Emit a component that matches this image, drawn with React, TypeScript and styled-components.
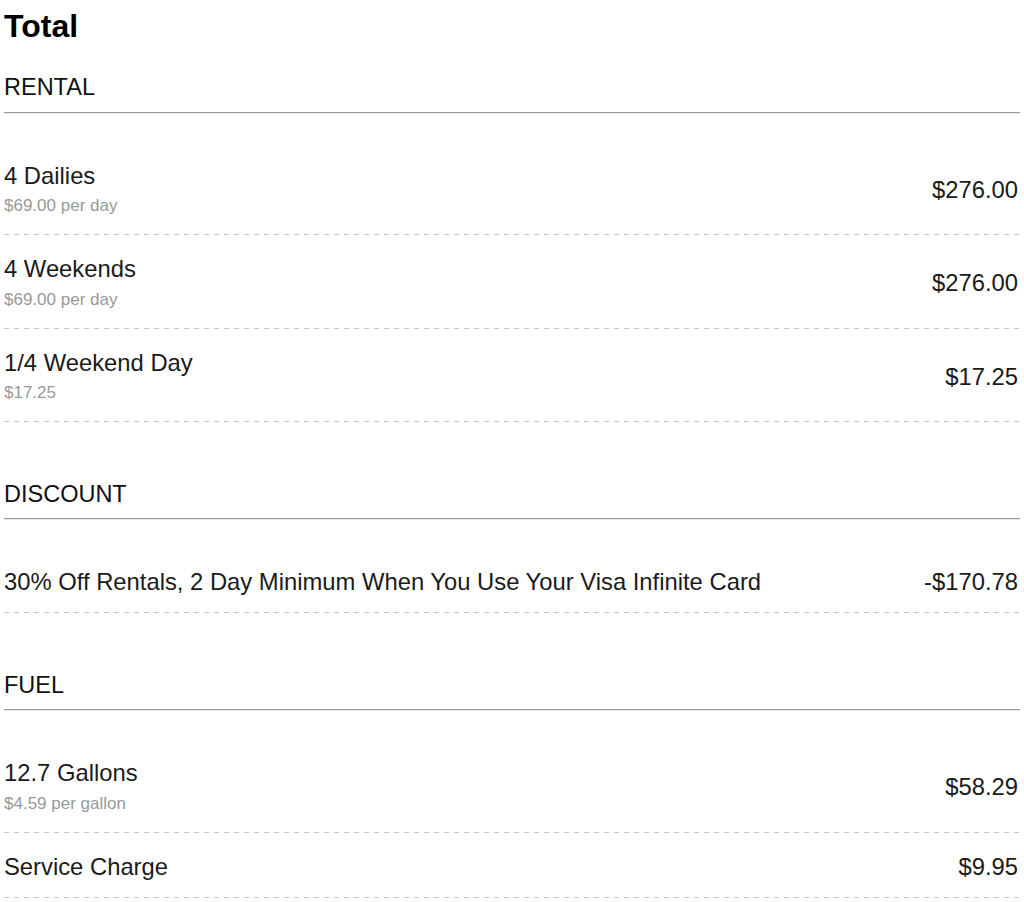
import React from "react";
import styled, { createGlobalStyle } from "styled-components";

const GlobalStyle = createGlobalStyle`
  html, body { margin: 0; padding: 0; background: #fff; }
  body { font-family: "Liberation Sans", Arial, sans-serif; color: #222; }
`;

const Page = styled.div`
  padding: 8px 4px 0;
`;

const Title = styled.h1`
  margin: 0;
  font-size: 32px;
  line-height: 37px;
  font-weight: bold;
  color: #000;
`;

const Section = styled.section`
  margin-top: 30px;
  & + & {
    margin-top: 59.5px;
  }
`;

const Heading = styled.h2`
  margin: 0 0 12.5px;
  font-size: 23.5px;
  line-height: 24px;
  font-weight: normal;
  color: #111;
`;

const Rule = styled.hr`
  margin: 0;
  height: 0;
  border: 0;
  border-top: 1px solid #9a9a9a;
  border-bottom: 1px solid #e6e6e6;
`;

const List = styled.div`
  margin-top: 28px;
`;

const Row = styled.div`
  display: flex;
  justify-content: space-between;
  align-items: center;
  padding: 22px 0 19px;
  background: linear-gradient(to right, #c4c4c4 50%, transparent 50%) left bottom / 10px 1px repeat-x;
`;

const Label = styled.div`
  display: flex;
  flex-direction: column;
`;

const Name = styled.span`
  font-size: 23.8px;
  line-height: 24px;
  color: #1a1a1a;
`;

const Note = styled.span`
  margin-top: 7.5px;
  font-size: 17px;
  line-height: 21px;
  color: #999;
`;

const Amount = styled.span`
  font-size: 23.8px;
  line-height: 24px;
  padding-right: 2px;
  color: #1a1a1a;
`;

type Item = { name: string; note?: string; amount: string };
type Group = { title: string; items: Item[] };

const groups: Group[] = [
  {
    title: "RENTAL",
    items: [
      { name: "4 Dailies", note: "$69.00 per day", amount: "$276.00" },
      { name: "4 Weekends", note: "$69.00 per day", amount: "$276.00" },
      { name: "1/4 Weekend Day", note: "$17.25", amount: "$17.25" },
    ],
  },
  {
    title: "DISCOUNT",
    items: [
      {
        name: "30% Off Rentals, 2 Day Minimum When You Use Your Visa Infinite Card",
        amount: "-$170.78",
      },
    ],
  },
  {
    title: "FUEL",
    items: [
      { name: "12.7 Gallons", note: "$4.59 per gallon", amount: "$58.29" },
      { name: "Service Charge", amount: "$9.95" },
    ],
  },
];

export default function App() {
  return (
    <>
      <GlobalStyle />
      <Page>
        <Title>Total</Title>
        {groups.map((g) => (
          <Section key={g.title}>
            <Heading>{g.title}</Heading>
            <Rule />
            <List>
              {g.items.map((it) => (
                <Row key={it.name}>
                  <Label>
                    <Name>{it.name}</Name>
                    {it.note && <Note>{it.note}</Note>}
                  </Label>
                  <Amount>{it.amount}</Amount>
                </Row>
              ))}
            </List>
          </Section>
        ))}
      </Page>
    </>
  );
}
